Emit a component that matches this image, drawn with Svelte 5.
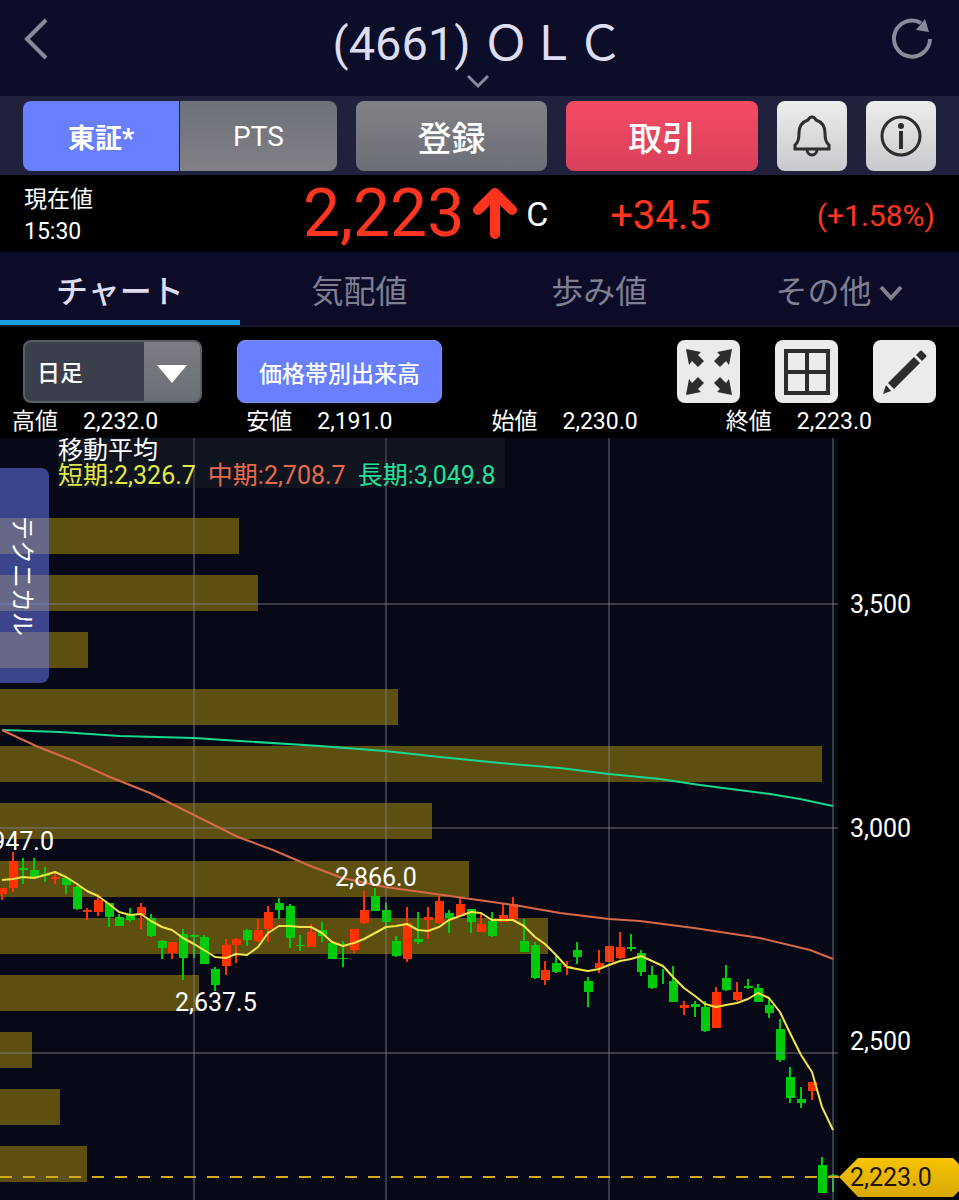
<script>
    let market = 'tse';
    let activeTab = 'chart';
    let period = 'day';
    let showVolume = true;

    const tabs = [
        { id: 'chart', label: 'チャート' },
        { id: 'quote', label: '気配値' },
        { id: 'ticks', label: '歩み値' },
        { id: 'other', label: 'その他', more: true }
    ];

    const stats = [
        { label: '高値', value: '2,232.0' },
        { label: '安値', value: '2,191.0' },
        { label: '始値', value: '2,230.0' },
        { label: '終値', value: '2,223.0' }
    ];

    const averages = [
        { name: 'short', label: '短期:2,326.7' },
        { name: 'middle', label: '中期:2,708.7' },
        { name: 'long', label: '長期:3,049.8' }
    ];

    // volume by price band: [y, width]
    const bands = [
        [80, 239], [137, 258], [194, 88], [251, 398], [308, 822], [365, 432],
        [423, 469], [480, 548], [537, 199], [594, 32], [651, 60], [708, 87]
    ];

    // [rising, high, body top, body bottom, low]
    const candles = [
        [1, 450, 450, 456, 462], [1, 414, 423, 450, 454], [0, 420, 430, 432, 446],
        [0, 420, 432, 439, 440], [0, 429, 436, 438, 444], [1, 435, 439, 441, 446],
        [0, 439, 440, 447, 456], [0, 448, 449, 471, 472], [1, 470, 472, 474, 482],
        [1, 456, 462, 474, 478], [0, 465, 465, 479, 489], [0, 476, 479, 488, 488],
        [0, 470, 476, 482, 484], [1, 465, 469, 477, 491], [0, 476, 480, 498, 499],
        [0, 502, 503, 510, 521], [1, 504, 504, 515, 521], [0, 491, 496, 520, 542],
        [0, 496, 497, 499, 520], [0, 497, 499, 526, 526], [0, 529, 531, 547, 553],
        [1, 501, 507, 528, 537], [1, 500, 501, 507, 525], [0, 491, 492, 502, 508],
        [1, 481, 492, 503, 504], [1, 468, 474, 491, 504], [0, 460, 465, 472, 481],
        [0, 466, 468, 500, 510], [0, 497, 507, 508, 513], [1, 486, 494, 509, 509],
        [0, 484, 492, 498, 504], [0, 504, 505, 521, 521], [0, 503, 520, 521, 529],
        [1, 491, 491, 512, 515], [1, 453, 472, 485, 486], [0, 450, 458, 473, 473],
        [0, 465, 472, 484, 492], [0, 498, 503, 518, 519], [1, 469, 485, 521, 524],
        [0, 474, 501, 504, 506], [1, 469, 479, 482, 501], [1, 458, 463, 485, 486],
        [0, 472, 475, 480, 495], [1, 459, 466, 478, 479], [0, 471, 471, 484, 495],
        [1, 474, 486, 494, 494], [0, 474, 483, 498, 499], [1, 466, 477, 484, 484],
        [1, 459, 466, 481, 482], [0, 481, 503, 514, 514], [0, 504, 507, 540, 541],
        [1, 523, 532, 542, 547], [0, 516, 525, 534, 535], [1, 523, 528, 529, 537],
        [0, 504, 512, 519, 526], [0, 539, 543, 554, 569], [1, 512, 525, 530, 535],
        [1, 508, 508, 524, 524], [1, 494, 509, 520, 521], [0, 496, 509, 511, 513],
        [0, 512, 515, 534, 538], [0, 528, 537, 550, 551], [0, 531, 531, 531, 546],
        [0, 528, 543, 564, 564], [1, 563, 567, 570, 577], [0, 563, 566, 569, 579],
        [0, 563, 569, 593, 594], [1, 549, 554, 590, 590], [0, 527, 540, 552, 553],
        [1, 544, 554, 562, 563], [0, 541, 548, 550, 551], [0, 546, 550, 564, 564],
        [0, 559, 567, 575, 580], [0, 581, 591, 622, 624], [0, 629, 639, 660, 665],
        [0, 649, 661, 665, 670], [1, 644, 644, 653, 662], [0, 719, 727, 755, 755],
        [0, 736, 737, 739, 754]
    ];

    const shortAverage = [
        442, 441, 439, 440, 437, 434, 439, 446, 453, 458, 466, 474, 477, 476, 483, 489,
        492, 500, 506, 512, 519, 520, 516, 517, 509, 495, 488, 488, 489, 489, 495, 504,
        508, 505, 501, 495, 489, 488, 486, 492, 493, 489, 482, 478, 474, 475, 482, 482,
        482, 488, 499, 506, 517, 529, 531, 533, 531, 527, 523, 521, 518, 523, 528, 539,
        550, 558, 566, 569, 567, 565, 561, 555, 560, 574, 595, 617, 634, 669, 692
    ];

    const middleAverage = '2,292 36,308 74,323 110,339 150,355 194,377 238,399 273,412 308,427 342,440 385,449 450,458 520,468 560,475 609,481 640,483 694,490 760,500 810,512 833,521';
    const longAverage = '2,292 60,294 120,298 194,300 240,303 320,308 385,313 440,319 500,325 560,330 609,336 660,341 700,347 770,356 800,361 833,368';

    const columns = [194, 386, 609, 833];
    const rows = [166, 390, 615];

    const candleX = (i) => Math.round(2 + (i * 831) / 78);

    $: shortPoints = shortAverage.map((y, i) => `${candleX(i)},${y}`).join(' ');
</script>

<main>
    <header>
        <button class="plain back" aria-label="戻る">
            <svg width="26" height="42" viewBox="0 0 26 42">
                <path d="M23 2 L4 21 L23 40" />
            </svg>
        </button>
        <button class="plain title">
            <span>(4661) ＯＬＣ</span>
            <svg width="22" height="14" viewBox="0 0 22 14" aria-hidden="true">
                <path d="M1 1 L11 11 L21 1" />
            </svg>
        </button>
        <button class="plain refresh" aria-label="更新">
            <svg width="42" height="42" viewBox="0 0 42 42">
                <path d="M39 21 A18 18 0 1 1 30 5" />
                <polygon points="34,1 25,12 38,14" />
            </svg>
        </button>
    </header>

    <div class="actions">
        <div class="segment">
            <button class:selected={market === 'tse'} on:click={() => (market = 'tse')}>東証*</button>
            <button class:selected={market === 'pts'} on:click={() => (market = 'pts')}>PTS</button>
        </div>
        <button class="action register">登録</button>
        <button class="action trade">取引</button>
        <button class="square" aria-label="通知">
            <svg width="42" height="44" viewBox="0 0 42 44">
                <path d="M21 3 C19 3 18 4 17 6 C11 8 8 13 8 19 C8 26 7 29 4 31 V35 H38 V31 C35 29 34 26 34 19 C34 13 31 8 25 6 C24 4 23 3 21 3 Z" />
                <path d="M16 35 C16 43 26 43 26 35" />
            </svg>
        </button>
        <button class="square" aria-label="情報">
            <svg width="44" height="44" viewBox="0 0 44 44">
                <circle cx="22" cy="22" r="19" />
                <circle class="solid" cx="22" cy="12" r="3" />
                <path class="stem" d="M22 17 V35" />
            </svg>
        </button>
    </div>

    <section class="quote">
        <div class="time">
            <div>現在値</div>
            <div>15:30</div>
        </div>
        <div class="price">
            <span class="value">2,223</span>
            <svg width="46" height="54" viewBox="0 0 46 54" aria-hidden="true">
                <path d="M23 7 V47 M6 23 L23 6 L40 23" />
            </svg>
            <span class="mark">C</span>
        </div>
        <div class="change">+34.5</div>
        <div class="percent">(+1.58%)</div>
    </section>

    <nav>
        {#each tabs as tab}
            <button class:active={activeTab === tab.id} on:click={() => (activeTab = tab.id)}>
                {tab.label}
                {#if tab.more}
                    <svg width="24" height="16" viewBox="0 0 24 16" aria-hidden="true">
                        <path d="M2 2 L12 13 L22 2" />
                    </svg>
                {/if}
            </button>
        {/each}
    </nav>

    <div class="toolbar">
        <div class="period">
            <select bind:value={period} aria-label="足種">
                <option value="day">日足</option>
                <option value="week">週足</option>
                <option value="month">月足</option>
            </select>
            <span class="arrow">
                <svg width="32" height="20" viewBox="0 0 32 20" aria-hidden="true">
                    <polygon points="1,1 31,1 16,19" />
                </svg>
            </span>
        </div>
        <button class="volume" class:off={!showVolume} on:click={() => (showVolume = !showVolume)}>価格帯別出来高</button>
        <div class="tools">
            <button class="square small" aria-label="全画面">
                <svg class="fill" width="48" height="48" viewBox="0 0 48 48">
                    <polygon points="1,1 16,4 13,7 19,13 13,19 7,13 4,17" />
                    <polygon points="47,1 44,17 41,13 35,19 29,13 35,7 32,4" />
                    <polygon points="1,47 4,31 7,35 13,29 19,35 13,41 16,44" />
                    <polygon points="47,47 32,44 35,41 29,35 35,29 41,35 44,31" />
                </svg>
            </button>
            <button class="square small" aria-label="分割">
                <svg width="48" height="48" viewBox="0 0 48 48">
                    <path class="grid" d="M3 3 H45 V45 H3 Z M24 3 V45 M3 24 H45" />
                </svg>
            </button>
            <button class="square small" aria-label="描画">
                <svg class="fill" width="48" height="48" viewBox="0 0 48 48">
                    <polygon points="2,46 5,37 10,43" />
                    <polygon points="7,35 33,9 39,15 13,41" />
                    <path d="M35 7 L39 3 Q40 2 41 3 L45 7 Q46 8 45 9 L41 13 Z" />
                </svg>
            </button>
        </div>
    </div>

    <dl class="stats">
        {#each stats as stat}
            <div>
                <dt>{stat.label}</dt>
                <dd>{stat.value}</dd>
            </div>
        {/each}
    </dl>

    <div class="chart">
        <svg viewBox="0 0 959 762" role="img" aria-label="株価チャート">
            <defs>
                <linearGradient id="tag" x1="0" y1="0" x2="0" y2="1">
                    <stop offset="0" stop-color="#f6c400" />
                    <stop offset="1" stop-color="#d8a808" />
                </linearGradient>
            </defs>
            <rect width="838" height="762" fill="#070917" />

            {#if showVolume}
                {#each bands as [y, width]}
                    <rect x="0" {y} {width} height="36" fill="#5c4f10" />
                {/each}
            {/if}

            {#each candles as [rising, high, top, bottom, low], i}
                <g fill={rising ? '#ff3200' : '#00cb0b'}>
                    <rect x={candleX(i) - 1} y={high} width="2" height={low - high} />
                    {#if bottom > top}
                        <rect x={candleX(i) - 4} y={top} width="9" height={bottom - top} />
                    {/if}
                </g>
            {/each}

            <g class="gridlines">
                {#each columns as x}
                    <line x1={x} x2={x} y1="0" y2="762" />
                {/each}
                {#each rows as y}
                    <line x1="0" x2="838" y1={y} y2={y} />
                {/each}
            </g>

            <polyline class="line long" points={longAverage} />
            <polyline class="line middle" points={middleAverage} />
            <polyline class="line short" points={shortPoints} />
            <line class="current" x1="0" x2="839" y1="739" y2="739" />

            <text x="54" y="412" text-anchor="end">2,947.0</text>
            <text x="335" y="448">2,866.0</text>
            <text x="175" y="573">2,637.5</text>

            <text x="850" y="175">3,500</text>
            <text x="850" y="399">3,000</text>
            <text x="850" y="612">2,500</text>

            <polygon points="839,739 858,720 953,720 959,726 959,753 953,759 858,759" fill="url(#tag)" />
            <text class="tag" x="850" y="748">2,223.0</text>
        </svg>

        <div class="legend">
            <div>移動平均</div>
            <div class="averages">
                {#each averages as average}
                    <span class={average.name}>{average.label}</span>
                {/each}
            </div>
        </div>
        <button class="technical">テクニカル</button>
    </div>
</main>

<style>
    :global(body) {
        margin: 0;
        background: #000;
    }

    main {
        background: #000;
        color: #fff;
        font-family: Roboto, "Noto Sans CJK JP", sans-serif;
        font-size: 23px;
        overflow: hidden;
    }

    button, select {
        font-family: inherit;
        color: inherit;
        border: none;
        padding: 0;
        margin: 0;
        cursor: pointer;
    }

    svg {
        display: block;
        fill: none;
    }

    header {
        display: grid;
        grid-template-columns: 1fr auto 1fr;
        align-items: start;
        height: 96px;
        padding: 0 26px 0 23px;
        box-sizing: border-box;
        background: #0c0d28;
    }

    .plain {
        background: none;
    }

    .plain path {
        stroke: #8b8a9c;
        stroke-width: 4;
    }

    .plain polygon {
        fill: #8b8a9c;
    }

    .back {
        justify-self: start;
        margin-top: 18px;
    }

    .title {
        display: flex;
        flex-direction: column;
        align-items: center;
        padding-top: 13px;
        font-size: 47px;
        line-height: 62px;
        color: #dedcf0;
    }

    .title path {
        stroke-width: 3;
    }

    .refresh {
        justify-self: end;
        margin-top: 18px;
    }

    .actions {
        display: flex;
        gap: 19px;
        padding: 5px 23px 4px;
        background: #1f213d;
    }

    .segment {
        display: flex;
        flex: 314;
        gap: 1px;
        border-radius: 8px;
        overflow: hidden;
    }

    .segment button {
        flex: 1;
        font-size: 28px;
        background: linear-gradient(#6d7078, #818187);
    }

    .segment .selected {
        font-size: 27px;
        font-weight: bold;
        background: #6880ff;
    }

    .action {
        flex: 192;
        height: 70px;
        border-radius: 8px;
        font-size: 34px;
        font-weight: 500;
    }

    .register {
        background: linear-gradient(#828187, #6c6f77);
    }

    .trade {
        background: linear-gradient(#f54b65, #d8405a);
    }

    .square {
        display: flex;
        align-items: center;
        justify-content: center;
        flex: none;
        width: 70px;
        height: 70px;
        border-radius: 8px;
        background: linear-gradient(#ededee, #c8c9cd);
    }

    .square path, .square circle {
        stroke: #2d2d2d;
        stroke-width: 3;
    }

    .square .solid {
        fill: #2d2d2d;
        stroke: none;
    }

    .square .stem {
        stroke-width: 4;
    }

    .square .grid {
        stroke-width: 4;
    }

    .square .fill {
        fill: #2d2d2d;
    }

    .square .fill path {
        stroke: none;
    }

    .quote {
        display: grid;
        grid-template-columns: 280fr 243fr 163fr 225fr;
        align-items: center;
        height: 77px;
        padding: 0 24px;
    }

    .time {
        padding-top: 4px;
        line-height: 32px;
    }

    .price {
        display: flex;
        align-items: center;
        gap: 8px;
    }

    .value {
        font-size: 66px;
        line-height: 76px;
        color: #ff3520;
    }

    .price path {
        stroke: #ff3520;
        stroke-width: 10;
        stroke-linecap: round;
        stroke-linejoin: round;
    }

    .mark {
        font-size: 34px;
    }

    .change, .percent {
        padding-top: 3px;
        text-align: right;
        color: #ff3520;
    }

    .change {
        font-size: 40px;
    }

    .percent {
        font-size: 30px;
    }

    nav {
        display: flex;
        background: #0c0c29;
        border-bottom: 2px solid #17172f;
    }

    nav button {
        display: flex;
        align-items: center;
        justify-content: center;
        gap: 7px;
        flex: 1;
        height: 73px;
        padding-top: 6px;
        box-sizing: border-box;
        font-size: 32px;
        color: #7f7f91;
        background: none;
        border-bottom: 5px solid transparent;
    }

    nav svg {
        margin-top: 8px;
    }

    nav path {
        stroke: #7f7f91;
        stroke-width: 4;
    }

    nav .active {
        color: #dedcf0;
        font-weight: 500;
        border-color: #17a0e6;
    }

    .toolbar {
        display: flex;
        align-items: center;
        gap: 35px;
        padding: 13px 23px 0;
    }

    .period {
        display: grid;
        grid-template-columns: 1fr 56px;
        width: 179px;
        height: 63px;
        box-sizing: border-box;
        border: 2px solid #5c5e66;
        border-radius: 8px;
        background: #3d3e4c;
        overflow: hidden;
    }

    select {
        grid-area: 1 / 1 / 2 / 3;
        appearance: none;
        padding: 4px 0 0 12px;
        font-size: 23px;
        font-weight: 500;
        background: transparent;
    }

    option {
        background: #3d3e4c;
    }

    .arrow {
        grid-area: 1 / 2;
        display: flex;
        align-items: center;
        justify-content: center;
        padding-top: 5px;
        background: linear-gradient(#7c7d83, #6b6e76);
        pointer-events: none;
    }

    .arrow polygon {
        fill: #fff;
    }

    .volume {
        width: 205px;
        height: 63px;
        border: 1px solid #8490e8;
        border-radius: 8px;
        font-size: 23px;
        font-weight: 500;
        background: #6880ff;
    }

    .volume.off {
        background: #3d3e4c;
    }

    .tools {
        display: flex;
        gap: 35px;
        margin-left: auto;
    }

    .small {
        width: 63px;
        height: 63px;
        background: #ebebed;
    }

    .stats {
        display: grid;
        grid-template-columns: 234fr 245fr 234fr 245fr;
        margin: 0;
        padding-top: 3px;
        line-height: 32px;
    }

    .stats div {
        display: flex;
        gap: 25px;
        padding-left: 12px;
    }

    dd {
        margin: 0;
    }

    .chart {
        position: relative;
    }

    .chart svg {
        width: 100%;
        height: auto;
    }

    .chart text {
        font-size: 25px;
        fill: #fff;
    }

    .chart .tag {
        fill: #1c1500;
    }

    .gridlines line {
        stroke: rgba(135, 135, 145, 0.4);
        stroke-width: 2;
    }

    .line {
        stroke-width: 2;
        stroke-linejoin: round;
    }

    .line.short {
        stroke: #f2e545;
    }

    .line.middle {
        stroke: #d8684a;
    }

    .line.long {
        stroke: #18d890;
    }

    .current {
        stroke: #d2a91c;
        stroke-width: 2;
        stroke-dasharray: 12 11;
    }

    .legend {
        position: absolute;
        top: 0;
        left: 58px;
        padding-right: 10px;
        font-size: 25px;
        line-height: 25px;
        background: rgba(40, 45, 50, 0.3);
    }

    .averages {
        display: flex;
        gap: 12px;
    }

    span.short {
        color: #e0e845;
    }

    span.middle {
        color: #e56b4c;
    }

    span.long {
        color: #22e09a;
    }

    .technical {
        position: absolute;
        top: 30px;
        left: 0;
        width: 49px;
        height: 215px;
        border-radius: 0 8px 8px 0;
        font-size: 24px;
        writing-mode: vertical-rl;
        text-orientation: sideways;
        background: rgba(113, 130, 255, 0.5);
    }
</style>
